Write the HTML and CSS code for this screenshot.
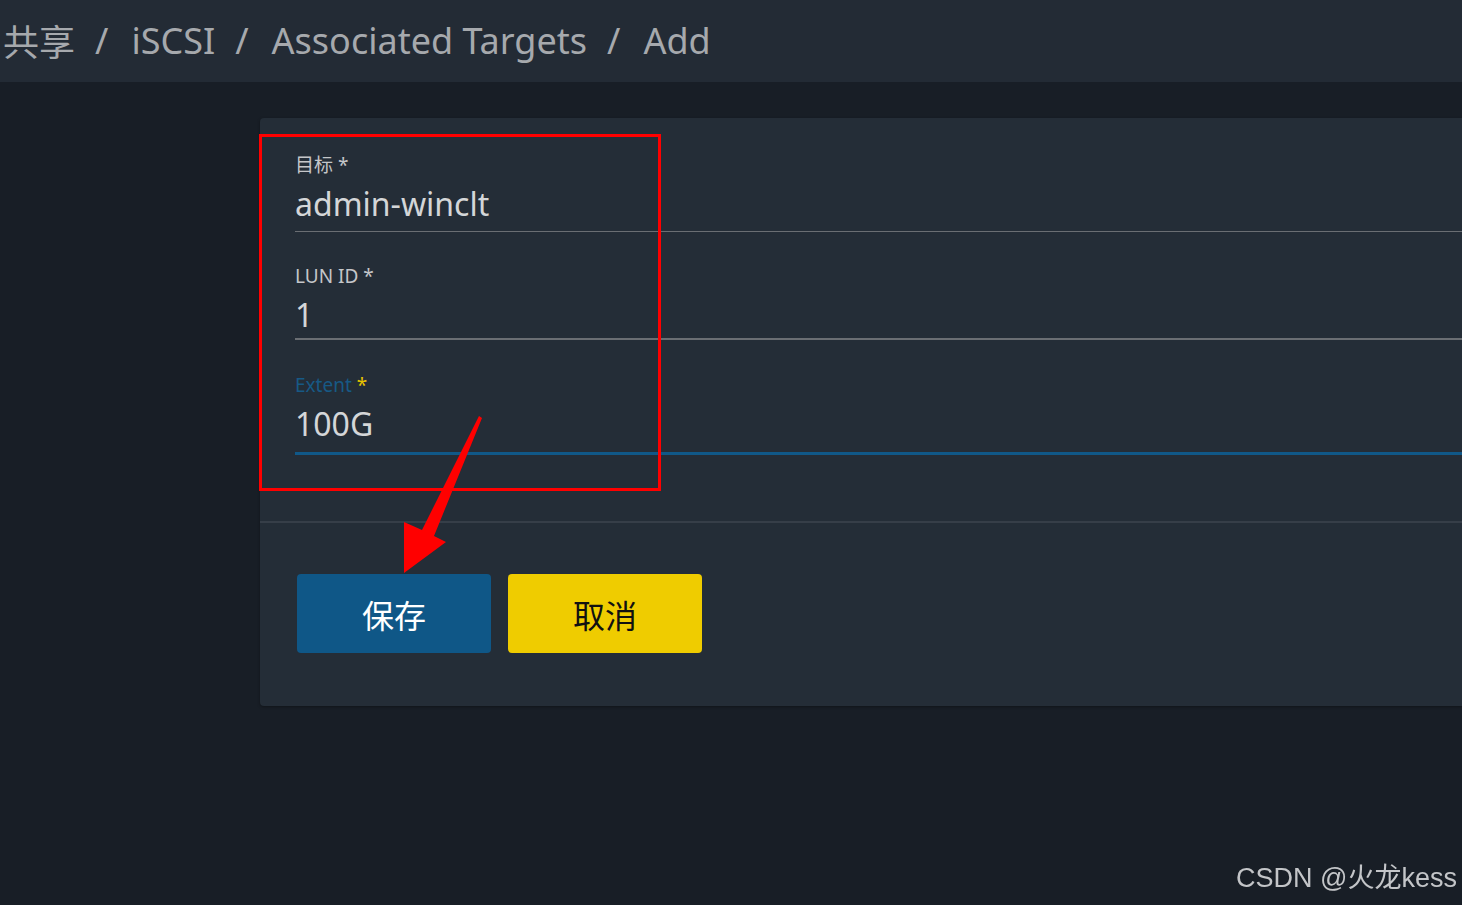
FILE: index.html
```html
<!DOCTYPE html>
<html lang="zh-CN">
<head>
  <meta charset="UTF-8" />
  <meta name="viewport" content="width=device-width, initial-scale=1.0"/>
  <title>Associated Targets - Add</title>
  <link rel="stylesheet" href="styles.css">
</head>
<body>
  <header class="topbar">
    <nav class="crumbs">
      <span>共享</span><span class="sep">/</span>
      <span>iSCSI</span><span class="sep">/</span>
      <span>Associated Targets</span><span class="sep">/</span>
      <span>Add</span>
    </nav>
  </header>

  <main class="page">
    <section class="card">
      <div class="form">
        <div class="field field-thin">
          <label class="field-label">目标 *</label>
          <div class="field-value">admin-winclt</div>
        </div>
        <div class="field field-mid">
          <label class="field-label">LUN ID *</label>
          <div class="field-value">1</div>
        </div>
        <div class="field field-focus">
          <label class="field-label">Extent <span class="req">*</span></label>
          <div class="field-value">100G</div>
        </div>
      </div>
      <div class="actions">
        <button class="btn btn-save">保存</button>
        <button class="btn btn-cancel">取消</button>
      </div>

      <!-- annotation drawn over the screenshot -->
      <div class="mark-box"></div>
      <svg class="mark-arrow" width="100" height="170" viewBox="0 0 100 170">
        <polygon points="79,0 82,2 34,120 46,126 4,157 4,106 22,114" fill="#ff0000"/>
      </svg>
    </section>
  </main>

  <div class="watermark">CSDN @火龙kess</div>
</body>
</html>
```

FILE: styles.css
```css
body {
  margin: 0;
  background: #181e26;
  font-family: "Noto Sans", "Noto Sans CJK SC", sans-serif;
  color: #c9cbce;
  min-height: 905px;
  overflow: hidden;
}

.topbar {
  height: 82px;
  background: #232b35;
  display: flex;
  align-items: center;
  padding-left: 3px;
}

.crumbs {
  font-size: 36px;
  color: #a6a9ad;
  display: flex;
  align-items: center;
  padding-bottom: 2px;
}

.crumbs .sep {
  margin: 0 23px 0 20px;
}

.page {
  padding: 36px 0 0 260px;
}

.card {
  position: relative;
  background: #242d37;
  border-radius: 4px 0 0 4px;
  box-shadow: 0 1px 3px rgba(0, 0, 0, 0.35);
}

.form {
  padding: 36px 0 66px 35px;
  border-bottom: 2px solid #363e48;
}

.field {
  margin-bottom: 33px;
}

.field:last-child {
  margin-bottom: 0;
}

.field-label {
  display: block;
  font-size: 19px;
  line-height: 22px;
  color: #c4c6c9;
  margin-bottom: 6px;
}

.field-value {
  font-size: 32px;
  line-height: 44px;
  color: #d4d6d8;
  padding-bottom: 5px;
}

.field-thin .field-value {
  border-bottom: 1px solid #6a6e73;
}

.field-mid {
  margin-bottom: 34px;
}

.field-mid .field-value {
  padding-bottom: 1px;
  border-bottom: 2px solid #6a6e73;
}

.field-focus .field-label {
  color: #175985;
}

.field-focus .req {
  color: #e8c300;
}

.field-focus .field-value {
  padding-bottom: 6px;
  border-bottom: 3px solid #105888;
}

.actions {
  display: flex;
  gap: 17px;
  padding: 51px 0 53px 37px;
}

.btn {
  width: 194px;
  height: 79px;
  border: none;
  border-radius: 4px;
  font-family: "Noto Sans CJK SC", sans-serif;
  font-size: 32px;
  cursor: pointer;
}

.btn-save {
  background: #0f5787;
  color: #ffffff;
}

.btn-cancel {
  background: #efcc00;
  color: #111111;
}

.mark-box {
  position: absolute;
  left: -1px;
  top: 16px;
  width: 396px;
  height: 351px;
  border: 3px solid #ff0000;
  pointer-events: none;
}

.mark-arrow {
  position: absolute;
  left: 140px;
  top: 298px;
  pointer-events: none;
}

.watermark {
  position: fixed;
  right: 5px;
  bottom: 10px;
  font-family: "Liberation Sans", "Noto Sans CJK SC", sans-serif;
  font-size: 27px;
  color: #c3c5c8;
}
```
